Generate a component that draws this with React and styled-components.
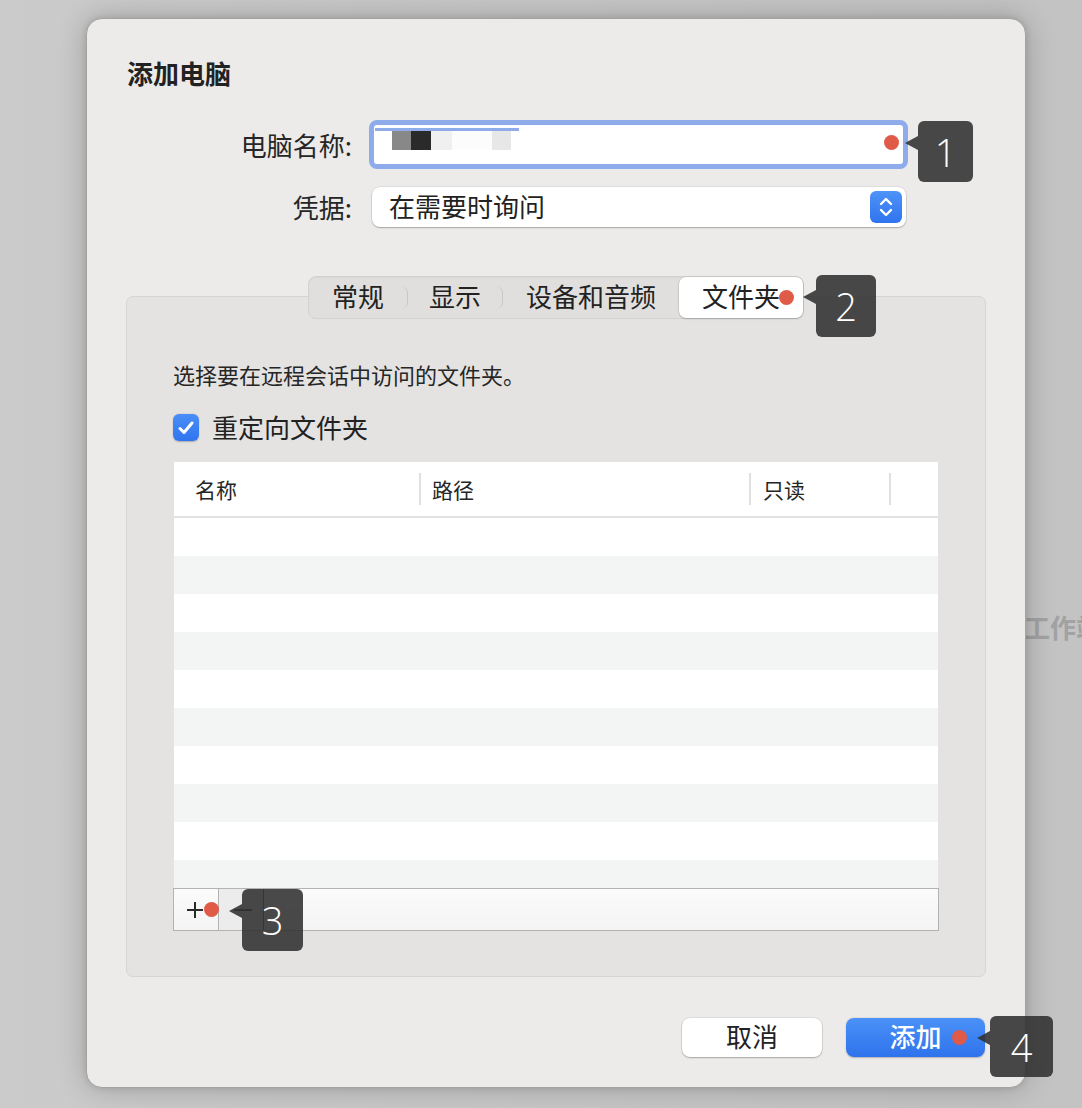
import React from 'react'
import styled, { createGlobalStyle } from 'styled-components'

const GlobalStyle = createGlobalStyle`
  html, body {
    margin: 0;
    padding: 0;
  }
  body {
    width: 1082px;
    height: 1108px;
    overflow: hidden;
    background: linear-gradient(90deg, #cbcbcb 0%, #c6c6c6 60%, #c3c3c3 100%);
    font-family: "Noto Sans CJK SC", "Noto Sans", sans-serif;
    color: #222;
  }
`

const Page = styled.div`
  position: relative;
  padding: 18px 0 0 86px;
`

const BehindText = styled.div`
  position: absolute;
  left: 1024px;
  top: 608px;
  font-size: 26px;
  font-weight: 700;
  color: #a2a2a2;
  white-space: nowrap;
`

const Dialog = styled.div`
  position: relative;
  width: 940px;
  height: 1070px;
  box-sizing: border-box;
  background: #ecebe9;
  border: 1px solid #a3a3a3;
  border-radius: 16px;
  box-shadow: 0 0 30px rgba(0, 0, 0, 0.22), 0 0 6px rgba(0, 0, 0, 0.12);
  display: flex;
  flex-direction: column;
`

const Title = styled.h1`
  margin: 0;
  padding: 38px 40px 2px;
  font-size: 26px;
  line-height: 32px;
  font-weight: 700;
  color: #222;
`

const Form = styled.div`
  display: flex;
  flex-direction: column;
  gap: 18px;
  margin-top: 29px;
`

const Row = styled.div`
  display: flex;
  align-items: center;
`

const Label = styled.div`
  width: 265px;
  text-align: right;
  font-size: 26px;
  line-height: 32px;
  color: #262626;
`

const FieldWrap = styled.div`
  position: relative;
  margin-left: ${p => p.$offset}px;
`

const TextField = styled.div`
  width: 539px;
  height: 49px;
  box-sizing: border-box;
  background: #fff;
  border: 5px solid #8eabeb;
  border-radius: 8px;
  position: relative;
  display: flex;
  align-items: flex-start;
  padding: 5px 0 0 18px;
`

const Highlight = styled.div`
  position: absolute;
  left: 1px;
  top: 3px;
  width: 144px;
  height: 3px;
  background: #8eabeb;
`

const Redacted = styled.div`
  display: flex;
`

const Swatch = styled.div`
  width: ${p => p.$w}px;
  height: 20px;
  background: ${p => p.$c};
`

const Dot = styled.span`
  position: absolute;
  width: 15px;
  height: 15px;
  border-radius: 50%;
  background: #e05a48;
  right: ${p => p.$right}px;
  top: ${p => p.$top}px;
`

const Select = styled.div`
  width: 534px;
  height: 40px;
  box-sizing: border-box;
  background: #fff;
  border-radius: 8px;
  box-shadow: 0 0 0 0.5px rgba(0, 0, 0, 0.12), 0 1px 1.5px rgba(0, 0, 0, 0.25);
  display: flex;
  align-items: center;
  justify-content: space-between;
  padding: 0 4px 0 17px;
  font-size: 26px;
  color: #222;
`

const Lifted = styled.span`
  position: relative;
  top: ${p => p.$by || -2}px;
`

const Stepper = styled.div`
  width: 32px;
  height: 32px;
  border-radius: 6px;
  background: linear-gradient(180deg, #4e93f7 0%, #2f74ee 100%);
  display: flex;
  align-items: center;
  justify-content: center;
`

const Panel = styled.div`
  margin: 69px 39px 0;
  background: #e4e3e1;
  border: 1px solid #d6d5d3;
  border-radius: 7px;
  padding: 0 46px 45px;
  display: flex;
  flex-direction: column;
`

const Tabs = styled.div`
  position: relative;
  align-self: center;
  margin-top: -21px;
  height: 43px;
  box-sizing: border-box;
  display: flex;
  align-items: center;
  background: #e0dfdd;
  border: 1px solid #d3d2d0;
  border-radius: 8px;
  box-shadow: inset 0 1px 1px rgba(0, 0, 0, 0.04);
`

const Tab = styled.div`
  position: relative;
  height: ${p => (p.$active ? '41px' : '23px')};
  box-sizing: border-box;
  display: flex;
  align-items: center;
  padding: 0 ${p => p.$pad}px;
  font-size: 26px;
  color: #222;
  background: ${p => (p.$active ? '#fff' : 'transparent')};
  border-radius: 7px;
  box-shadow: ${p => (p.$active ? '0 0 0 0.5px rgba(0,0,0,0.1), 0 1px 2px rgba(0,0,0,0.18)' : 'none')};
  border-right: ${p => (p.$sep ? '1px solid #c9c8c6' : 'none')};
`

const Description = styled.p`
  margin: 43px 0 0;
  font-size: 22px;
  line-height: 24px;
  color: #262626;
`

const CheckRow = styled.label`
  display: flex;
  align-items: center;
  gap: 13px;
  margin-top: 28px;
  font-size: 26px;
  line-height: 27px;
  color: #222;
`

const Check = styled.span`
  width: 26px;
  height: 27px;
  border-radius: 6px;
  background: linear-gradient(180deg, #4a8ef7 0%, #2f75ee 100%);
  box-shadow: 0 0.5px 1.5px rgba(0, 0, 0, 0.25);
  display: flex;
  align-items: center;
  justify-content: center;
`

const TableBox = styled.div`
  margin-top: 21px;
  width: 766px;
  display: flex;
  flex-direction: column;
`

const Header = styled.div`
  margin: 0 1px;
  height: 54px;
  background: #fff;
  border-bottom: 2px solid #e2e2e2;
  display: grid;
  grid-template-columns: 247px 330px 140px 1fr;
  align-items: center;
`

const HeadCell = styled.div`
  height: 32px;
  display: flex;
  align-items: center;
  padding-left: ${p => p.$pad}px;
  font-size: 21px;
  color: #262626;
  border-right: ${p => (p.$sep ? '2px solid #e0e0e0' : 'none')};
`

const Body = styled.div`
  margin: 0 1px;
  height: 370px;
  overflow: hidden;
  display: flex;
  flex-direction: column;
`

const BodyRow = styled.div`
  flex: 0 0 38px;
  background: ${p => (p.$odd ? '#f3f4f4' : '#fff')};
`

const ButtonBar = styled.div`
  position: relative;
  height: 43px;
  box-sizing: border-box;
  border: 1px solid #b3b3b3;
  background: linear-gradient(180deg, #fbfbfb 0%, #f4f4f4 100%);
  display: flex;
`

const BarButton = styled.div`
  position: relative;
  width: 45px;
  display: flex;
  align-items: center;
  justify-content: flex-start;
  padding-left: ${p => p.$pad}px;
  box-sizing: border-box;
  border-right: 1px solid ${p => p.$edge};
  background: ${p => p.$bg};
`

const IconLayer = styled.span`
  position: relative;
  z-index: 6;
  display: flex;
`

const Footer = styled.div`
  margin-top: 41px;
  padding-right: 40px;
  display: flex;
  justify-content: flex-end;
  gap: 24px;
`

const Button = styled.div`
  position: relative;
  width: ${p => p.$w}px;
  height: 39px;
  box-sizing: border-box;
  border-radius: 8px;
  display: flex;
  align-items: center;
  justify-content: center;
  font-size: 26px;
  font-weight: ${p => (p.$primary ? 500 : 400)};
  color: ${p => (p.$primary ? '#fff' : '#222')};
  background: ${p => (p.$primary ? 'linear-gradient(180deg, #4b91f7 0%, #2f73ec 100%)' : '#fff')};
  box-shadow: ${p => (p.$primary
    ? '0 0.5px 1.5px rgba(0,0,0,0.25)'
    : '0 0 0 0.5px rgba(0,0,0,0.12), 0 1px 1.5px rgba(0,0,0,0.25)')};
`

const Callout = styled.div`
  position: absolute;
  left: ${p => p.$left};
  top: ${p => p.$top}px;
  width: ${p => p.$w}px;
  height: ${p => p.$h}px;
  border-radius: 6px;
  background: rgba(48, 48, 48, 0.88);
  color: #fff;
  display: flex;
  align-items: center;
  justify-content: center;
  font-family: "Open Sans", "Liberation Sans", sans-serif;
  font-weight: 300;
  font-size: 38px;
  z-index: 5;
  &::before {
    content: '';
    position: absolute;
    left: -13px;
    top: 15px;
    border-top: 7px solid transparent;
    border-bottom: 7px solid transparent;
    border-right: 13px solid rgba(48, 48, 48, 0.88);
  }
`

const ChevronPair = () => (
  <svg width="18" height="24" viewBox="0 0 18 24">
    <polyline points="4,9 9,4 14,9" fill="none" stroke="#fff" strokeWidth="2.4" strokeLinecap="round" strokeLinejoin="round" />
    <polyline points="4,15 9,20 14,15" fill="none" stroke="#fff" strokeWidth="2.4" strokeLinecap="round" strokeLinejoin="round" />
  </svg>
)

const CheckMark = () => (
  <svg width="18" height="16" viewBox="0 0 18 16">
    <polyline points="3,8.5 7,12.5 15,3" fill="none" stroke="#fff" strokeWidth="3" strokeLinecap="round" strokeLinejoin="round" />
  </svg>
)

const PlusIcon = () => (
  <svg width="18" height="18" viewBox="0 0 18 18">
    <line x1="9" y1="1" x2="9" y2="17" stroke="#2a2a2a" strokeWidth="2" />
    <line x1="1" y1="9" x2="17" y2="9" stroke="#2a2a2a" strokeWidth="2" />
  </svg>
)

const MinusIcon = () => (
  <svg width="20" height="18" viewBox="0 0 20 18">
    <line x1="1" y1="9" x2="19" y2="9" stroke="#333" strokeWidth="2" />
  </svg>
)

const tabs = [
  { label: '常规', pad: 23 },
  { label: '显示', pad: 21 },
  { label: '设备和音频', pad: 23 },
]

const App = () => {
  return (
    <Page>
      <GlobalStyle />
      <BehindText>工作站</BehindText>
      <Dialog>
        <Title>添加电脑</Title>

        <Form>
          <Row>
            <Label>电脑名称:</Label>
            <FieldWrap $offset={17}>
              <TextField>
                <Highlight />
                <Redacted>
                  <Swatch $w={19} $c="#888" />
                  <Swatch $w={20} $c="#2a2a2a" />
                  <Swatch $w={21} $c="#f0f0f0" />
                  <Swatch $w={40} $c="#fcfcfc" />
                  <Swatch $w={19} $c="#e7e7e7" />
                </Redacted>
                <Dot $right={4} $top={10} />
              </TextField>
              <Callout $left="calc(100% + 10px)" $top={1} $w={55} $h={61}>1</Callout>
            </FieldWrap>
          </Row>
          <Row>
            <Label>凭据:</Label>
            <FieldWrap $offset={20}>
              <Select>
                <Lifted>在需要时询问</Lifted>
                <Stepper><ChevronPair /></Stepper>
              </Select>
            </FieldWrap>
          </Row>
        </Form>

        <Panel>
          <Tabs>
            {tabs.map((t, i) => (
              <Tab key={t.label} $pad={t.pad} $sep={i < 2}><Lifted>{t.label}</Lifted></Tab>
            ))}
            <Tab $active $pad={23}>
              <Lifted>文件夹</Lifted>
              <Dot $right={9} $top={13} />
            </Tab>
            <Callout $left="calc(100% + 13px)" $top={-2} $w={60} $h={62}>2</Callout>
          </Tabs>

          <Description>选择要在远程会话中访问的文件夹。</Description>

          <CheckRow>
            <Check><CheckMark /></Check>
            <Lifted $by={-1}>重定向文件夹</Lifted>
          </CheckRow>

          <TableBox>
            <Header>
              <HeadCell $pad={21} $sep>名称</HeadCell>
              <HeadCell $pad={11} $sep>路径</HeadCell>
              <HeadCell $pad={12} $sep>只读</HeadCell>
              <HeadCell $pad={0} />
            </Header>
            <Body>
              {Array.from({ length: 10 }).map((_, i) => (
                <BodyRow key={i} $odd={i % 2 === 1} />
              ))}
            </Body>
            <ButtonBar>
              <BarButton $edge="#b3b3b3" $bg="transparent" $pad={12}>
                <PlusIcon />
                <Dot $right={-1} $top={13} />
              </BarButton>
              <BarButton $edge="#5a5a5a" $bg="#ececec" $pad={14}>
                <IconLayer><MinusIcon /></IconLayer>
              </BarButton>
              <Callout $left="68px" $top={0} $w={61} $h={62}>3</Callout>
            </ButtonBar>
          </TableBox>
        </Panel>

        <Footer>
          <Button $w={140}><Lifted>取消</Lifted></Button>
          <Button $w={139} $primary>
            <Lifted>添加</Lifted>
            <Dot $right={18} $top={12} />
            <Callout $left="calc(100% + 5px)" $top={-2} $w={63} $h={61}>4</Callout>
          </Button>
        </Footer>
      </Dialog>
    </Page>
  )
}

export default App
